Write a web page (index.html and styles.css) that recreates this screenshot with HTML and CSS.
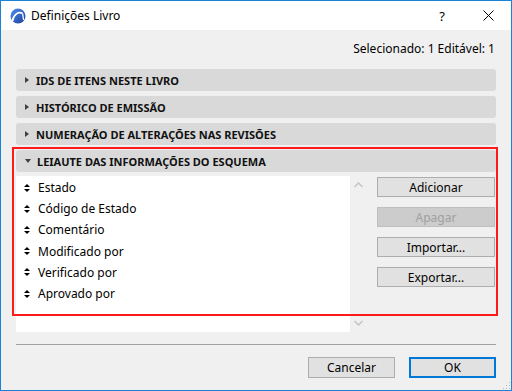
FILE: index.html
```html
<!DOCTYPE html>
<html lang="pt">
<head>
    <meta charset="UTF-8">
    <title>Definições Livro</title>
    <link rel="stylesheet" href="styles.css">
</head>
<body>
    <div class="window">
        <div class="titlebar">
            <svg class="app-icon" width="16" height="16" viewBox="0 0 16 16">
                <defs>
                    <linearGradient id="disc" x1="0" y1="0" x2="1" y2="1">
                        <stop offset="0" stop-color="#4f8ff0"/>
                        <stop offset="1" stop-color="#1c3f9e"/>
                    </linearGradient>
                </defs>
                <circle cx="8" cy="8" r="7.5" fill="url(#disc)"/>
                <path d="M2.5 13 C3.5 6.5 8.5 3 12.6 5.6" stroke="#fff" stroke-width="1.8" fill="none"/>
                <path d="M12.6 5.6 L13.6 12" stroke="#fff" stroke-width="1.3" fill="none"/>
            </svg>
            <span class="title">Definições Livro</span>
            <span class="title-btn help">?</span>
            <span class="title-btn close">
                <svg width="11" height="11" viewBox="0 0 11 11"><path d="M0.5 0.5 L10.5 10.5 M10.5 0.5 L0.5 10.5" stroke="#000" stroke-width="1"/></svg>
            </span>
        </div>

        <div class="content">
            <div class="status">Selecionado: 1 Editável: 1</div>

            <div class="section">
                <div class="section-head"><span class="arrow-right"></span>IDS DE ITENS NESTE LIVRO</div>
            </div>
            <div class="section">
                <div class="section-head"><span class="arrow-right"></span>HISTÓRICO DE EMISSÃO</div>
            </div>
            <div class="section">
                <div class="section-head"><span class="arrow-right"></span>NUMERAÇÃO DE ALTERAÇÕES NAS REVISÕES</div>
            </div>
            <div class="section open">
                <div class="highlight"></div>
                <div class="section-head"><span class="arrow-down"></span>LEIAUTE DAS INFORMAÇÕES DO ESQUEMA</div>
                <div class="section-body">
                    <ul class="field-list">
                        <li><span class="sort"></span>Estado</li>
                        <li><span class="sort"></span>Código de Estado</li>
                        <li><span class="sort"></span>Comentário</li>
                        <li><span class="sort"></span>Modificado por</li>
                        <li><span class="sort"></span>Verificado por</li>
                        <li><span class="sort"></span>Aprovado por</li>
                    </ul>
                    <div class="scroll">
                        <svg width="9" height="6" viewBox="0 0 9 6"><path d="M0.5 5 L4.5 1 L8.5 5" stroke="#c4c4c4" stroke-width="1.5" fill="none"/></svg>
                        <svg width="9" height="6" viewBox="0 0 9 6"><path d="M0.5 1 L4.5 5 L8.5 1" stroke="#c4c4c4" stroke-width="1.5" fill="none"/></svg>
                    </div>
                    <div class="side-buttons">
                        <button class="btn">Adicionar</button>
                        <button class="btn" disabled>Apagar</button>
                        <button class="btn">Importar...</button>
                        <button class="btn">Exportar...</button>
                    </div>
                </div>
            </div>

            <div class="separator"></div>

            <div class="footer">
                <button class="btn wide">Cancelar</button>
                <button class="btn wide default">OK</button>
            </div>
        </div>
        <div class="grip"></div>
    </div>
</body>
</html>
```

FILE: styles.css
```css
* {
    box-sizing: border-box;
    margin: 0;
    padding: 0;
}

body {
    font-family: "Noto Sans", "Open Sans", sans-serif;
    font-size: 12px;
    color: #000;
    background: #f0f0f0;
}

.window {
    position: relative;
    width: 512px;
    height: 391px;
    border: 1px solid #1883d7;
    background: #f0f0f0;
    display: flex;
    flex-direction: column;
}

.titlebar {
    height: 29px;
    background: #fff;
    display: flex;
    align-items: center;
    padding-left: 9px;
}

.app-icon {
    margin-right: 5px;
}

.title {
    flex: 1;
    font-size: 12px;
}

.title-btn {
    width: 46px;
    text-align: center;
    font-size: 13px;
}

.close {
    display: flex;
    justify-content: center;
    align-items: center;
}

.content {
    flex: 1;
    padding: 0 15px;
    display: flex;
    flex-direction: column;
}

.status {
    text-align: right;
    line-height: 16px;
    margin-top: 11px;
    margin-bottom: 12px;
    padding-right: 1px;
}

.section {
    position: relative;
    margin-bottom: 5px;
}

.section-head {
    height: 22px;
    background: #d9d9d9;
    border-radius: 3px;
    display: flex;
    align-items: center;
    padding-left: 9px;
    font-weight: bold;
    font-size: 11px;
    color: #111;
}

.arrow-right {
    width: 0;
    height: 0;
    border-top: 3.5px solid transparent;
    border-bottom: 3.5px solid transparent;
    border-left: 4px solid #404040;
    margin-right: 7px;
}

.arrow-down {
    width: 0;
    height: 0;
    border-left: 3.5px solid transparent;
    border-right: 3.5px solid transparent;
    border-top: 4px solid #404040;
    margin-right: 6px;
}

.section.open {
    margin-bottom: 0;
}

.highlight {
    position: absolute;
    left: -4px;
    top: -3px;
    width: 486px;
    height: 169px;
    border: 2px solid #ff1a1a;
    pointer-events: none;
    z-index: 2;
}

.section-body {
    display: flex;
    margin-top: 4px;
}

.field-list {
    list-style: none;
    width: 334px;
    height: 156px;
    padding-top: 1px;
    background: #fff;
}

.field-list li {
    height: 21.2px;
    display: flex;
    align-items: center;
    padding-left: 8px;
}

.sort {
    width: 0;
    height: 0;
    position: relative;
    border-left: 3px solid transparent;
    border-right: 3px solid transparent;
    border-bottom: 3px solid #000;
    margin-right: 8px;
    margin-top: -5px;
}

.sort::after {
    content: "";
    position: absolute;
    left: -3px;
    top: 5px;
    border-left: 3px solid transparent;
    border-right: 3px solid transparent;
    border-top: 3px solid #000;
}

.scroll {
    width: 16px;
    height: 156px;
    display: flex;
    flex-direction: column;
    justify-content: space-between;
    align-items: center;
    padding: 6px 0;
}

.side-buttons {
    margin-left: 11px;
    margin-top: 1px;
    display: flex;
    flex-direction: column;
    gap: 10px;
}

.btn {
    font-family: inherit;
    font-size: 12px;
    width: 118px;
    height: 20px;
    background: #e1e1e1;
    border: 1px solid #adadad;
    color: #000;
}

.btn:disabled {
    background: #cccccc;
    border-color: #bfbfbf;
    color: #a0a0a0;
}

.separator {
    height: 1px;
    background: #a0a0a0;
    margin-top: 12px;
}

.footer {
    display: flex;
    justify-content: flex-end;
    gap: 14px;
    margin-top: 12px;
}

.btn.wide {
    width: 87px;
    height: 21px;
}

.btn.default {
    border: 2px solid #0078d7;
}

.grip {
    position: absolute;
    right: 1px;
    bottom: 1px;
    width: 8px;
    height: 8px;
    background:
        radial-gradient(circle, #b8b8b8 0.9px, transparent 1px) 0 0 / 3px 3px;
    clip-path: polygon(100% 0, 100% 100%, 0 100%);
}
```
